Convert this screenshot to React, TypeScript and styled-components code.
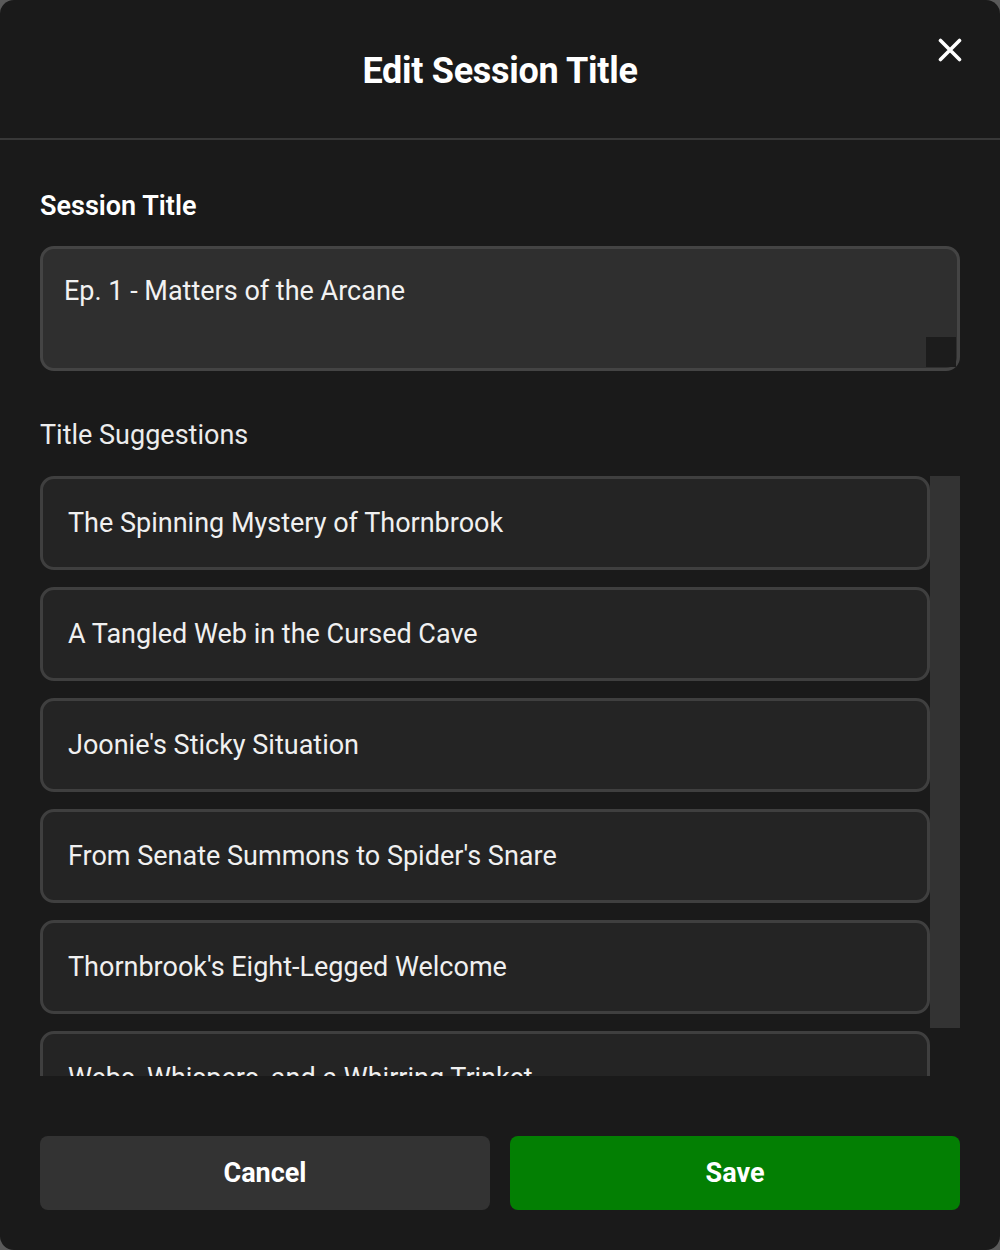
import React, { useState } from 'react';
import styled, { createGlobalStyle } from 'styled-components';

const GlobalStyle = createGlobalStyle`
  html, body {
    margin: 0;
    padding: 0;
    background: #5a5a5a;
  }
  body {
    font-family: Roboto, "Liberation Sans", Arial, sans-serif;
    color: #fff;
  }
  * {
    box-sizing: border-box;
  }
`;

const Modal = styled.div`
  width: 1000px;
  height: 1250px;
  background: #1a1a1a;
  border-radius: 14px;
  display: flex;
  flex-direction: column;
  overflow: hidden;
`;

const Header = styled.header`
  height: 140px;
  flex-shrink: 0;
  display: grid;
  grid-template-columns: 1fr auto 1fr;
  padding: 0 38px;
  border-bottom: 2px solid #383838;
`;

const Title = styled.h1`
  grid-column: 2;
  align-self: center;
  margin: 3px 0 0;
  font-size: 36px;
  font-weight: 700;
  letter-spacing: -0.3px;
`;

const CloseButton = styled.button`
  grid-column: 3;
  justify-self: end;
  align-self: start;
  margin-top: 38px;
  width: 24px;
  height: 24px;
  padding: 0;
  border: none;
  background: transparent;
  cursor: pointer;
  display: flex;
`;

const Body = styled.div`
  flex: 1;
  display: flex;
  flex-direction: column;
  padding: 50px 40px 40px;
`;

const FieldLabel = styled.label<{ bold?: boolean }>`
  display: block;
  font-size: 27px;
  line-height: 32px;
  font-weight: ${p => (p.bold ? 600 : 400)};
  color: ${p => (p.bold ? '#fff' : '#ececec')};
`;

// the textarea's own resize grip is replaced by the dark corner square
const InputWrap = styled.div`
  position: relative;
  margin-top: 24px;
`;

const TitleInput = styled.textarea`
  display: block;
  width: 100%;
  height: 125px;
  padding: 26px 21px 24px;
  background: #2f2f2f;
  border: 3px solid #444;
  border-radius: 14px;
  color: #f2f2f2;
  font-family: inherit;
  font-size: 27px;
  line-height: 32px;
  resize: none;
  outline: none;
`;

const ResizeCorner = styled.span`
  position: absolute;
  right: 4px;
  bottom: 4px;
  width: 30px;
  height: 30px;
  background: #1c1c1c;
`;

const SuggestionsLabel = styled(FieldLabel)`
  margin-top: 48px;
`;

const ListRow = styled.div`
  margin-top: 25px;
  height: 600px;
  display: flex;
`;

const SuggestionList = styled.ul`
  flex: 1;
  list-style: none;
  margin: 0;
  padding: 0;
  overflow-y: auto;
  display: flex;
  flex-direction: column;
  gap: 17px;
  scrollbar-width: none;

  &::-webkit-scrollbar {
    display: none;
  }
`;

const ScrollTrack = styled.div`
  width: 30px;
  flex-shrink: 0;
`;

const ScrollThumb = styled.div`
  height: 552px;
  background: #333;
`;

const Suggestion = styled.li<{ active?: boolean }>`
  flex-shrink: 0;
  height: 94px;
  display: flex;
  align-items: center;
  padding: 0 25px;
  background: #242424;
  border: 3px solid ${p => (p.active ? '#6a6a6a' : '#3f3f3f')};
  border-radius: 14px;
  font-size: 27px;
  color: #f0f0f0;
  white-space: nowrap;
  cursor: pointer;
`;

const Footer = styled.div`
  margin-top: 60px;
  display: grid;
  grid-template-columns: 1fr 1fr;
  gap: 20px;
`;

const ActionButton = styled.button<{ primary?: boolean }>`
  height: 74px;
  border: none;
  border-radius: 8px;
  background: ${p => (p.primary ? '#037f03' : '#333')};
  color: #fff;
  font-family: inherit;
  font-size: 27px;
  font-weight: 700;
  cursor: pointer;
`;

const suggestions = [
  'The Spinning Mystery of Thornbrook',
  'A Tangled Web in the Cursed Cave',
  "Joonie's Sticky Situation",
  "From Senate Summons to Spider's Snare",
  "Thornbrook's Eight-Legged Welcome",
  'Webs, Whispers, and a Whirring Trinket',
];

export default function App() {
  const [title, setTitle] = useState('Ep. 1 - Matters of the Arcane');

  return (
    <>
      <GlobalStyle />
      <Modal>
        <Header>
          <Title>Edit Session Title</Title>
          <CloseButton aria-label="Close">
            <svg width="24" height="24" viewBox="0 0 24 24" fill="none">
              <path
                d="M2.5 2.5L21.5 21.5M21.5 2.5L2.5 21.5"
                stroke="#fff"
                strokeWidth="3.6"
                strokeLinecap="round"
              />
            </svg>
          </CloseButton>
        </Header>
        <Body>
          <FieldLabel bold>Session Title</FieldLabel>
          <InputWrap>
            <TitleInput value={title} onChange={e => setTitle(e.target.value)} />
            <ResizeCorner />
          </InputWrap>
          <SuggestionsLabel>Title Suggestions</SuggestionsLabel>
          <ListRow>
            <SuggestionList>
              {suggestions.map(s => (
                <Suggestion key={s} onClick={() => setTitle(s)}>
                  {s}
                </Suggestion>
              ))}
            </SuggestionList>
            <ScrollTrack>
              <ScrollThumb />
            </ScrollTrack>
          </ListRow>
          <Footer>
            <ActionButton>Cancel</ActionButton>
            <ActionButton primary>Save</ActionButton>
          </Footer>
        </Body>
      </Modal>
    </>
  );
}
